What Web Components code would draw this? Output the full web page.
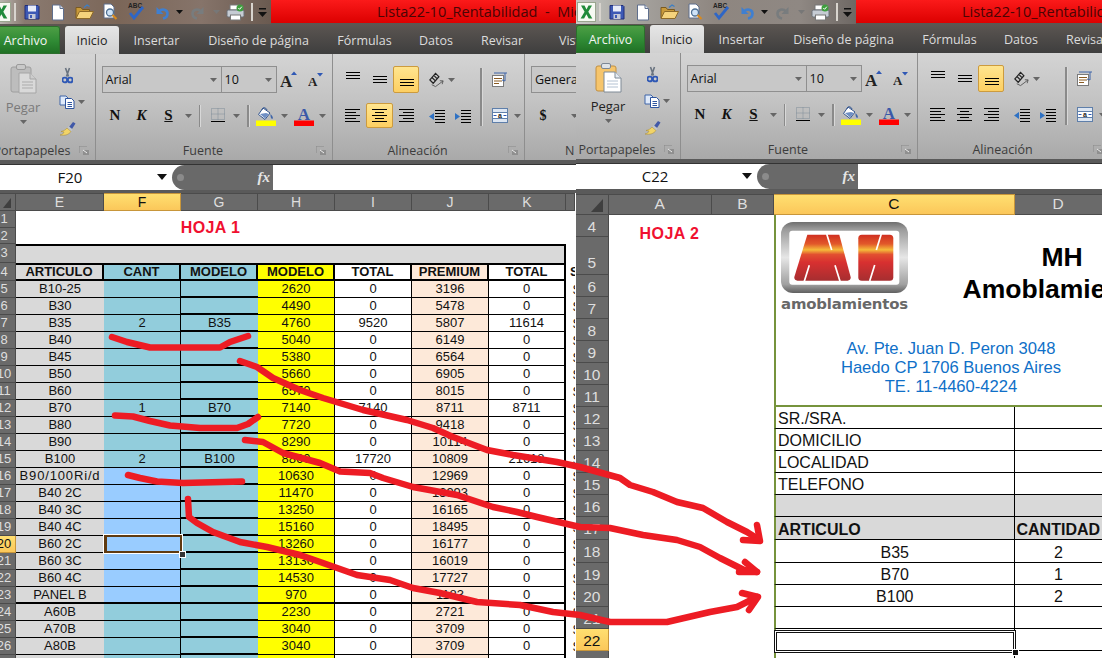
<!DOCTYPE html>
<html lang="es">
<head>
<meta charset="utf-8">
<title>Lista22-10_Rentabilidad</title>
<style>
  html, body { margin: 0; padding: 0; background: #555; }
  body { width: 1102px; height: 658px; overflow: hidden; display: flex; position: relative; font-family: "Liberation Sans", Arial, sans-serif; }
</style>
</head>
<body>
<xl-window style="width:576px;--qat:linear-gradient(90deg,#c9cbc6 0,#8a7a70 12%,#7b6658 45%,#86746a 75%,#6a5a50 100%)" shift="9" cell="F20" tabs-h="30" disabled-paste center-on>
  <hoja-uno></hoja-uno>
</xl-window>
<xl-window style="width:526px;--qat:linear-gradient(90deg,#c9cbc6 0,#a8a6a2 18%,#8e8680 50%,#8f8883 80%,#6e6864 100%)" shift="0" cell="C22" tabs-h="29">
  <hoja-dos></hoja-dos>
</xl-window>
<ink-strokes></ink-strokes>

<script>
const svg = (w, h, body) => `<svg width="${w}" height="${h}" viewBox="0 0 ${w} ${h}" xmlns="http://www.w3.org/2000/svg">${body}</svg>`;
const arrow = (c = "#555") => svg(7, 4, `<path d="M0 0h7L3.5 4z" fill="${c}"/>`);

const qatIcons = {
  save: svg(16, 16, `<path d="M1 1.5h13l1 1V15H1z" fill="#3d59b5" stroke="#222f78"/><rect x="4" y="1.5" width="8" height="6" fill="#e8ecf8"/><rect x="4.5" y="10" width="7" height="5" fill="#c5c9d6"/><rect x="6" y="11" width="2" height="3" fill="#3d59b5"/>`),
  doc: svg(14, 17, `<path d="M1.5 1h7.5l3.5 3.5V16h-11z" fill="#fff" stroke="#5f6f8d"/><path d="M9 1v3.5h3.500" fill="#dfe4ee" stroke="#5f6f8d"/>`),
  open: svg(19, 16, `<path d="M1 14V3.500h5l1.500 2h7v2" fill="#c99a3a" stroke="#7a5a20"/><path d="M1 14.500l3.500-7h14l-3.500 7z" fill="#f5d37c" stroke="#8e6a28"/><path d="M9 3.500l3-2.500 2.500 1.500" fill="none" stroke="#3d7fc4" stroke-width="1.300"/>`),
  preview: svg(16, 18, `<path d="M2 1h7l3 3v11H2z" fill="#fff" stroke="#5f6f8d"/><circle cx="8" cy="9.500" r="3.500" fill="#cfe3f7" stroke="#4d6f94" stroke-width="1.300"/><path d="M10.500 12l4 4" stroke="#d88a1e" stroke-width="2.200"/>`),
  spell: svg(18, 18, `<text x="1" y="5" font-family="Liberation Sans" font-size="6.500" font-weight="700" fill="#222">ABC</text><path d="M3 10l4 5 9-11" fill="none" stroke="#2e66c6" stroke-width="2.800"/>`),
  undo: svg(15, 15, `<path d="M4 6.500c3-3.500 8.500-2 8.500 2 0 2.500-2 4.500-4.500 5" fill="none" stroke="#3f7fd0" stroke-width="2.600"/><path d="M1.500 2v7h7z" fill="#3f7fd0"/>`),
  redo: svg(15, 15, `<path d="M11 6.500c-3-3.500-8.500-2-8.500 2 0 2.500 2 4.500 4.500 5" fill="none" stroke="#787c7e" stroke-width="2.600"/><path d="M13.500 2v7h-7z" fill="#787c7e"/>`),
  print: svg(19, 17, `<rect x="4" y="1" width="10" height="5" fill="#fff" stroke="#777"/><rect x="1" y="6" width="17" height="7" rx="1.500" fill="#c6ccd4" stroke="#6b7078"/><rect x="4.500" y="11" width="10" height="5" fill="#fff" stroke="#777"/><circle cx="14" cy="4" r="3.500" fill="#3f9e3f"/><path d="M12.300 4l1.300 1.300 2.200-2.600" fill="none" stroke="#fff"/>`),
  custom: svg(9, 9, `<rect x="1" y="0" width="7" height="1.500" fill="#111"/><path d="M0 4h9L4.500 9z" fill="#111"/>`),
  excel: svg(19, 20, `<rect x=".5" y=".5" width="18" height="19" fill="#f6f9f2" stroke="#9aa58f"/><path d="M4 3.500h3.500l2 4 2-4H15l-3.700 6.300L15.300 16.500h-3.600l-2.300-4.300-2.300 4.300H3.600l4-6.700z" fill="#1f8a3a"/>`)
};

const lines = (w, h, ys, lens, x0) => svg(w, h, ys.map((y, i) => {
  const l = lens[i % lens.length];
  const x = x0 === "c" ? Math.round((w - l) / 2) : x0 === "r" ? w - l : 0;
  return `<rect x="${x}" y="${y}" width="${l}" height="1" fill="#000"/>`;
}).join(""));

const ribbonIcons = {
  paste: on => on
    ? svg(27, 30, `<rect x="1" y="3" width="20" height="25" rx="2" fill="#f6c56c" stroke="#c08f42"/><rect x="6.500" y="0.500" width="9" height="5" rx="1.500" fill="#dfe3e8" stroke="#7d8794"/><path d="M9 9h11l6 6v14H9z" fill="#fff" stroke="#7f8a96"/><path d="M20 9v6h6" fill="#e6ecf3" stroke="#7f8a96"/><path d="M12 18h11M12 21h11M12 24h11" stroke="#b4c2d2"/>`)
    : svg(27, 30, `<rect x="1" y="3" width="20" height="25" rx="2" fill="#bdbdbd" stroke="#9e9e9e"/><rect x="6.500" y="0.500" width="9" height="5" rx="1.500" fill="#c8c8c8" stroke="#9a9a9a"/><path d="M9 9h11l6 6v14H9z" fill="#d9d9d9" stroke="#a5a5a5"/><path d="M20 9v6h6" fill="#cdcdcd" stroke="#a5a5a5"/><path d="M12 18h11M12 21h11M12 24h11" stroke="#ababab"/>`),
  cut: svg(11, 17, `<path d="M3.500 1l3 8.500M7.500 1l-3 8.500" stroke="#6a7480" stroke-width="1.600"/><circle cx="2.800" cy="13" r="2.400" fill="none" stroke="#2f58b5" stroke-width="1.900"/><circle cx="8.200" cy="13" r="2.400" fill="none" stroke="#2f58b5" stroke-width="1.900"/>`),
  copy: svg(16, 14, `<path d="M1 1h6l2 2v7H1z" fill="#dfeafa" stroke="#3f65a8"/><path d="M6.500 3.500h6l2.500 2.500v7.500H6.500z" fill="#fff" stroke="#2f55a0"/><path d="M8.500 7.500h4.500M8.500 9.500h4.500M8.500 11.500h4.500" stroke="#2f55a0"/>`),
  brush: svg(17, 15, `<path d="M10 6l4-5 2.500 1.500L13 8z" fill="#4058a8"/><path d="M9.500 5l4 3.500-1.500 2-4-3z" fill="#bfc4cc"/><path d="M8 7l4 3.500c-2 3-6 4.500-11 3.500 2.500-.5 3.500-1.500 4-3-1-.3-2-.5-3-.5 2.500-.5 4.500-1.500 6-3.500z" fill="#f2d468" stroke="#a88a32" stroke-width=".500"/>`),
  launcher: svg(10, 9, `<path d="M0 0h8M0 0v7" stroke="#8a8a8a"/><rect x="4" y="4" width="6" height="5" fill="#8f8f8f"/><path d="M4 4l4 3" stroke="#eee"/>`),
  grow: svg(19, 17, `<text x="0" y="16" font-family="Liberation Serif" font-weight="700" font-size="17" fill="#222">A</text><path d="M11 4l3-3.500 3 3.500z" fill="#2f58b5"/>`),
  shrink: svg(16, 15, `<text x="0" y="14" font-family="Liberation Serif" font-weight="700" font-size="13" fill="#222">A</text><path d="M9 1h6l-3 3.500z" fill="#2f58b5"/>`),
  border: svg(14, 15, `<path d="M.5 .5h13v11h-13zM7 .5v11M.5 6h13" fill="none" stroke="#7f8c98" stroke-dasharray="1 1"/><rect y="13" width="14" height="1" fill="#000"/>`),
  fill: svg(20, 20, `<path d="M7 2l7 5-5 6.500-6.500-5z" fill="#fff" stroke="#33558f"/><path d="M4 8l6-1 3 1-4 4.500z" fill="#6f8fc4"/><path d="M6 4c0-3 4-3 5 0" fill="none" stroke="#33558f"/><path d="M14.500 8c2 2 3 3.500 2 5-1.300 0-2.200-2-2-5z" fill="#3f65a8"/><rect x="0" y="14.500" width="20" height="5.500" fill="#ffff00"/>`),
  color: svg(20, 20, `<text x="10" y="13.500" text-anchor="middle" font-family="Liberation Serif" font-weight="700" font-size="17" fill="#3a58a8">A</text><rect y="14.500" width="20" height="5.500" fill="#ff0000"/>`),
  orient: svg(18, 17, `<path d="M2 9l6-7 3.500 3.500-6 7zM4.200 6.400l3.600 3.600M6.200 4.200l3.600 3.600" fill="none" stroke="#222" stroke-width="1.300"/><path d="M4 14l4 2 8-6M16 10l-3.500-.2M16 10l-1 3.500" fill="none" stroke="#5a5a5a"/>`),
  wrap: svg(16, 15, `<rect x=".5" y="3.500" width="11" height="11" fill="#fff" stroke="#7a7a7a"/><path d="M2 6.500h8M2 9h8M2 11.500h5" stroke="#8a5a20"/><path d="M2 1h13M13 1v8l-3-1" fill="none" stroke="#3f65a8"/>`),
  indentL: svg(16, 14, `<path d="M6 1.500h10M6 4.500h10M6 7.500h10M6 10.500h10M6 13.500h10" stroke="#000"/><path d="M0 7.500l5-3.500v7z" fill="#2f72c4"/>`),
  indentR: svg(16, 14, `<path d="M6 1.500h10M6 4.500h10M6 7.500h10M6 10.500h10M6 13.500h10" stroke="#000"/><path d="M5 7.500L0 4v7z" fill="#2f72c4"/>`),
  merge: svg(16, 15, `<rect x=".5" y=".5" width="15" height="14" fill="#dde6f2" stroke="#5f7faa"/><rect x=".5" y="4.500" width="15" height="6" fill="#fff" stroke="#5f7faa"/><text x="8" y="10" text-anchor="middle" font-family="Liberation Sans" font-weight="700" font-size="7" fill="#222">a</text><path d="M1.500 7.500h3M11.500 7.500h3" stroke="#2f58b5"/>`)
};
const aTop = lines(15, 27, [6, 9, 12], [14], "c");
const aMid = lines(15, 27, [10, 13, 16], [14], "c");
const aBot = lines(15, 27, [13, 16, 19], [14], "c");
const rLeft = lines(15, 25, [6, 9, 12, 15, 18], [15, 11], 0);
const rCenter = lines(15, 25, [6, 9, 12, 15, 18], [15, 9], "c");
const rRight = lines(15, 25, [6, 9, 12, 15, 18], [15, 11], "r");

class XlTitlebar extends HTMLElement {
  constructor() {
    super();
    this.attachShadow({ mode: "open" });
    const cell = (w, html) => `<span class="q" style="width:${w}px">${html}</span>`;
    this.shadowRoot.innerHTML = /*html*/ `
      <style>
        :host { display: flex; height: 24px; width: 640px; background: #5c5652; }
        .qat { display: flex; width: 279.5px; height: 24px; align-items: center; flex: none; background: var(--qat); }
        .q { display: flex; justify-content: center; align-items: center; flex: none; height: 23px; }
        .sep { width: 1.5px; height: 18px; background: #d8d4ce; }
        .red { flex: 1; height: 23px; background: linear-gradient(#fb1a1a, #dc0000); padding-left: 106.5px;
          font: 14.5px/23px "Open Sans", sans-serif; color: #4a0505; white-space: pre; box-sizing: border-box; }
      </style>
      <div class="qat">
        ${cell(20, qatIcons.excel)}${cell(8, `<i class="sep"></i>`)}
        ${cell(26, qatIcons.save)}${cell(26, qatIcons.doc)}${cell(26, qatIcons.open)}${cell(26, qatIcons.preview)}${cell(26, qatIcons.spell)}
        ${cell(26, qatIcons.undo)}${cell(8, arrow("#111"))}${cell(28, qatIcons.redo)}${cell(10, arrow("#777"))}
        ${cell(28, qatIcons.print)}${cell(6, `<i class="sep"></i>`)}${cell(15, qatIcons.custom)}
      </div>
      <div class="red">Lista22-10_Rentabilidad  -  Microsoft Excel</div>`;
  }
}

class XlTabs extends HTMLElement {
  constructor() {
    super();
    this.attachShadow({ mode: "open" });
    const tabs = [["Insertar", 75], ["Diseño de página", 129], ["Fórmulas", 83], ["Datos", 60], ["Revisar", 72], ["Vista", 70]];
    this.shadowRoot.innerHTML = /*html*/ `
      <style>
        :host { display: flex; align-items: flex-end; width: 640px; background: linear-gradient(#5c5652, #3e3e3e);
          font: 12.5px "Open Sans", sans-serif; color: #dcdcdc; }
        span { display: flex; align-items: center; justify-content: center; height: 28px; flex: none; white-space: nowrap; }
        .file { width: 69px; color: #f4f4f4; border-radius: 3px 3px 0 0; margin-right: 5px;
          background: linear-gradient(#4fa046, #2f8a34 55%, #1f6f24); box-shadow: inset 0 0 0 1px #2c6e2c; }
        .home { width: 54px; color: #222; border-radius: 3px 3px 0 0; background: linear-gradient(#e6e6e6, #d0d0d0); }
      </style>
      <span class="file">Archivo</span><span class="home">Inicio</span>
      ${tabs.map(([t, w]) => `<span style="width:${w}px">${t}</span>`).join("")}`;
  }
}

class XlRibbon extends HTMLElement {
  constructor() {
    super();
    this.attachShadow({ mode: "open" });
  }

  connectedCallback() {
    const pasteOn = !this.hasAttribute("disabled-paste");
    const centerOn = this.hasAttribute("center-on");
    const t = (w, html = "", cls = "") => `<span class="t ${cls}" style="width:${w}px">${html}</span>`;
    const ar = (w, c) => t(w, arrow(c || "#666"));
    const sep = w => t(w, `<i class="vl"></i>`);
    const label = text => `<div class="lab"><span>${text}</span><em>${ribbonIcons.launcher}</em></div>`;
    this.shadowRoot.innerHTML = /*html*/ `
      <style>
        :host { display: flex; height: 106px; width: 640px; font: 12.5px "Open Sans", sans-serif; color: #333;
          background: linear-gradient(#d4d4d4, #c3c3c3 45%, #a9a9a9); }
        .g { display: flex; flex-direction: column; flex: none; height: 106px; box-sizing: border-box; border-right: 1.5px solid #8e8e8e; padding-top: 12px; position: relative; }
        .r { display: flex; flex: none; }
        .r1 { height: 27px; margin-bottom: 10px; }
        .r2 { height: 25px; }
        .t { display: flex; align-items: center; justify-content: center; flex: none; height: 100%; box-sizing: border-box; }
        .vl { display: block; width: 1.5px; height: 22px; background: #8a8a8a; box-shadow: 1px 0 #d8d8d8; }
        .on { background: linear-gradient(#ffe58f, #fdcf62); border: 1px solid #cc9b3e; border-radius: 2px; }
        .lab { position: absolute; left: 0; right: 0; bottom: 1px; height: 18px; display: flex; color: #3c3c3c; align-items: center; }
        .lab span { flex: 1; text-align: center; }
        .lab em { width: 22px; display: flex; justify-content: center; }
        .box { border: 1px solid #8f8f8f; display: flex; align-items: center; justify-content: space-between; padding: 0 4px 0 3px; box-sizing: border-box; height: 27px; font-size: 12.5px; color: #111; flex: none; background: #c8c8c8; }
        .b { font: 700 15px "Liberation Serif", serif; color: #111; }
        .cl { display: grid; grid-template-columns: 65px 1fr; height: 90px; margin-top: -5px; }
        .p { display: flex; flex-direction: column; align-items: center; padding-top: 3px; margin-left: -1px; }
        .p b { font-weight: 400; font-size: 13px; color: ${pasteOn ? "#222" : "#7a7a7a"}; margin: 4px 0 4px; height: 18px; }
        .m { display: flex; flex-direction: column; }
        .m span { display: flex; height: 27px; align-items: center; }
        .m u { display: flex; width: 22px; justify-content: center; text-decoration: none; }
        .stack { display: flex; }
        .c2 { display: flex; flex-direction: column; }
      </style>
      <section class="g" style="width:105px">
        <div class="cl">
          <div class="p">${ribbonIcons.paste(pasteOn)}<b>Pegar</b>${arrow("#666")}</div>
          <div class="m">
            <span><u style="margin-top:2px">${ribbonIcons.cut}</u></span>
            <span><u>${ribbonIcons.copy}</u>${arrow("#666")}</span>
            <span><u>${ribbonIcons.brush}</u></span>
          </div>
        </div>
        ${label("Portapapeles")}
      </section>
      <section class="g" style="width:237px;padding-left:5.5px">
        <div class="r r1">
          <span class="box" style="width:120px">Arial${arrow("#666")}</span>
          <span class="box" style="width:55px;border-left:0">10${arrow("#666")}</span>
          ${t(26, ribbonIcons.grow)}${t(26, ribbonIcons.shrink)}
        </div>
        <div class="r r2">
          ${t(27, `<span class="b">N</span>`)}${t(26, `<span class="b"><i>K</i></span>`)}${t(28, `<span class="b"><u>S</u></span>`)}${ar(11)}
          ${sep(12)}${t(24, ribbonIcons.border)}${ar(13)}${sep(11)}
          ${t(25, ribbonIcons.fill)}${ar(12)}${t(27, ribbonIcons.color)}${ar(10)}
        </div>
        ${label("Fuente")}
      </section>
      <section class="g" style="width:192px;padding-left:5px">
        <div class="stack">
          <div class="c2" style="width:137px">
            <div class="r r1">
              ${t(28, aTop)}${t(26, aMid)}${t(1)}${t(26, aBot, "on")}${t(9)}${t(17, ribbonIcons.orient)}${t(0)}${ar(12)}
            </div>
            <div class="r r2">
              ${t(28, rLeft)}${t(27, rCenter, centerOn ? "on" : "")}${t(27, rRight)}${t(4)}${t(25, ribbonIcons.indentL)}${t(1)}${t(25, ribbonIcons.indentR)}
            </div>
          </div>
          <i class="vl" style="height:58px;margin:2px 0 0 5px"></i>
          <div class="c2" style="margin-left:5px">
            <div class="r r1">${t(26, ribbonIcons.wrap)}</div>
            <div class="r r2">${t(26, ribbonIcons.merge)}${ar(9)}</div>
          </div>
        </div>
        ${label("Alineación")}
      </section>
      <section class="g" style="width:100px;padding-left:6px;border:0">
        <div class="r r1"><span class="box" style="width:120px">Genera</span></div>
        <div class="r r2">${t(24, `<span class="b" style="font-size:14px">$</span>`)}${t(14)}${ar(10)}</div>
        <div class="lab" style="justify-content:flex-start;padding-left:40px"><span style="flex:none">N</span></div>
      </section>`;
  }
}

class XlFormula extends HTMLElement {
  constructor() {
    super();
    this.attachShadow({ mode: "open" });
  }

  connectedCallback() {
    this.shadowRoot.innerHTML = /*html*/ `
      <style>
        :host { display: flex; height: 25px; width: 640px; margin-top: 3.5px; background: #fff; border-top: 1px solid #333; box-sizing: content-box; }
        .name { width: 181px; display: flex; align-items: center; flex: none; background: #fff; font: 15px "Open Sans", sans-serif; color: #111; }
        .name span { width: 158px; text-align: center; }
        .pill { width: 101px; flex: none; background: #696969; border-radius: 13px 0 0 13px; display: flex; align-items: center; justify-content: space-between; padding: 0 3px 0 5px; box-sizing: border-box; }
        .dot { width: 7px; height: 7px; border-radius: 50%; background: #8b8b8b; }
        .fx { font: italic 700 15px "Liberation Serif", serif; color: #e5e5e5; }
        .name svg { margin-left: 8px; }
      </style>
      <div class="name"><span>${this.getAttribute("cell")}</span>${svg(10, 6, `<path d="M0 0h10L5 6z" fill="#111"/>`)}</div>
      <div class="pill"><i class="dot"></i><span class="fx">fx</span></div>`;
  }
}

class XlWindow extends HTMLElement {
  constructor() {
    super();
    this.attachShadow({ mode: "open" });
  }

  connectedCallback() {
    const shift = this.getAttribute("shift") || 0;
    const tabsH = this.getAttribute("tabs-h");
    const pass = ["disabled-paste", "center-on"].filter(a => this.hasAttribute(a)).join(" ");
    this.shadowRoot.innerHTML = /*html*/ `
      <style>
        :host { display: flex; flex-direction: column; flex: none; height: 658px; overflow: hidden; background: #5a5a5a; }
        .chrome { margin-left: -${shift}px; flex: none; }
        xl-tabs { height: ${tabsH}px; }
        .gap { height: ${tabsH == 30 ? 3 : 5}px; flex: none; }
      </style>
      <div class="chrome">
        <xl-titlebar></xl-titlebar>
        <xl-tabs></xl-tabs>
        <xl-ribbon ${pass}></xl-ribbon>
        <xl-formula cell="${this.getAttribute("cell")}"></xl-formula>
      </div>
      <div class="gap"></div>
      <slot></slot>`;
  }
}

const sheetBase = `
  :host { display: block; font: 13px "Liberation Sans", Arial, sans-serif; color: #111; background: #fff; }
  .grid { display: grid; overflow: hidden; }
  .grid > div { box-sizing: border-box; display: flex; align-items: center; justify-content: center; overflow: hidden; white-space: nowrap; min-width: 0; }
  .ch { background: #6a6a6a; color: #dedede; border-right: 1px solid #4b4b4b; border-top: 1px solid #4b4b4b; border-bottom: 1px solid #4b4b4b; }
  .rh { background: #6a6a6a; color: #dedede; border-bottom: 1px solid #4b4b4b; border-right: 1px solid #4b4b4b; }
  .sel { background: linear-gradient(#ffdf70, #fbc75a); color: #111; border-color: #c8963a !important; }
`;

class HojaUno extends HTMLElement {
  constructor() {
    super();
    this.attachShadow({ mode: "open" });
    const data = [
      ["B10-25", "", "", 2620, 0, 3196, 0], ["B30", "", "", 4490, 0, 5478, 0], ["B35", 2, "B35", 4760, 9520, 5807, 11614],
      ["B40", "", "", 5040, 0, 6149, 0], ["B45", "", "", 5380, 0, 6564, 0], ["B50", "", "", 5660, 0, 6905, 0],
      ["B60", "", "", 6570, 0, 8015, 0], ["B70", 1, "B70", 7140, 7140, 8711, 8711], ["B80", "", "", 7720, 0, 9418, 0],
      ["B90", "", "", 8290, 0, 10114, 0], ["B100", 2, "B100", 8860, 17720, 10809, 21618], ["B90/100Ri/d", "", "", 10630, 0, 12969, 0],
      ["B40 2C", "", "", 11470, 0, 13993, 0], ["B40 3C", "", "", 13250, 0, 16165, 0], ["B40 4C", "", "", 15160, 0, 18495, 0],
      ["B60 2C", "", "", 13260, 0, 16177, 0], ["B60 3C", "", "", 13130, 0, 16019, 0], ["B60 4C", "", "", 14530, 0, 17727, 0],
      ["PANEL B", "", "", 970, 0, 1183, 0], ["A60B", "", "", 2230, 0, 2721, 0], ["A70B", "", "", 3040, 0, 3709, 0],
      ["A80B", "", "", 3040, 0, 3709, 0], ["", "", "", "", "", "", ""]
    ];
    const letters = ["E", "F", "G", "H", "I", "J", "K", ""];
    const rowNo = n => `<div class="rh"><span class="n">${n}</span></div>`;
    let html = `<div class="ch corner">${svg(8, 10, `<path d="M8 0v10H0z" fill="#3f3f3f"/>`)}</div>`;
    html += letters.map(l => `<div class="ch ${l === "F" ? "sel" : ""}">${l}</div>`).join("");
    html += rowNo(1) + `<div class="title" style="grid-column:2/7;grid-row:2/4">HOJA 1</div><div style="grid-column:7/10;grid-row:2/4"></div>`;
    html += rowNo(2);
    html += rowNo(3) + `<div class="band" style="grid-column:2/9"></div><div></div>`;
    html += rowNo(4);
    const heads = [["ARTICULO", "e"], ["CANT", "bl"], ["MODELO", "bl"], ["MODELO", "y"], ["TOTAL", "w"], ["PREMIUM", "p"], ["TOTAL", "w k"]];
    html += heads.map(([t, c]) => `<div class="hd ${c}">${t}</div>`).join("") + `<div class="l h"><b>S</b></div>`;
    data.forEach((r, i) => {
      const n = i + 5;
      const rowCls = n === 23 ? " end" : "";
      const fBlue = n >= 16 && n <= 23 ? "f2" : "bl";
      const wide = r[0] === "B90/100Ri/d" ? ` style="letter-spacing:.85px"` : "";
      html += `<div class="rh ${n === 20 ? "sel" : ""}"><span class="n">${n}</span></div>`;
      html += `<div class="c e${rowCls}"><span${wide}>${r[0]}</span></div>`;
      html += `<div class="c ${fBlue} f${rowCls}">${r[1]}</div>`;
      html += `<div class="c bl g${rowCls}">${r[2]}</div>`;
      html += `<div class="c y v${rowCls}">${r[3]}</div>`;
      html += `<div class="c w v${rowCls}">${r[4]}</div>`;
      html += `<div class="c p v${rowCls}">${r[5]}</div>`;
      html += `<div class="c w k${rowCls}">${r[6]}</div>`;
      html += `<div class="l"><span>${r[0] ? "$" : ""}</span></div>`;
    });
    this.shadowRoot.innerHTML = /*html*/ `
      <style>
        ${sheetBase}
        .grid { position: relative; grid-template-columns: 16px 88px 77px 77px 77px 77px 77px 77px 9px;
          grid-template-rows: 18px 17px 16px 19px 18px repeat(23, 17px); }
        .ch { font-size: 14px; }
        .corner { justify-content: flex-end !important; padding-right: 4px; align-items: flex-end !important; padding-bottom: 2px; }
        .rh { justify-content: flex-start !important; font-size: 13px; }
        .n { display: block; width: 24px; margin-left: -8px; flex: none; text-align: center; }
        .title { color: #f01030; font-weight: 700; font-size: 16px; letter-spacing: .4px; padding: 2px 7px 0 0; background: #fff; }
        .band { background: #d9d9d9; border-top: 2px solid #000; border-right: 2px solid #000; }
        .hd { font-weight: 700; font-size: 13px; color: #111; border-top: 2px solid #000; border-bottom: 2px solid #000; border-right: 2px solid #000; }
        .hd.e { background: #d9d9d9; border-right: 2px solid #000; }
        .c { border-bottom: 1px solid #000; }
        .e { background: #d9d9d9; }
        .bl { background: #92cddc; }
        .f2 { background: #99ccff; }
        .y { background: #ffff00; }
        .w { background: #fff; }
        .p { background: #fde9d9; }
        .f { border-right: 1px solid #000; }
        .g { border-bottom: 2px solid #000; }
        .v { border-right: 1px solid #000; }
        .k { border-right: 2px solid #000; }
        .end { border-bottom: 2px solid #000; }
        .l { justify-content: flex-start !important; padding-left: 7px; color: #111; background: #fff; overflow: hidden; }
        .l.h { padding-left: 4px; }
        .active { position: absolute; left: 104px; top: 342.5px; width: 78px; height: 18px; box-sizing: border-box;
          border: 2px solid #5f3a10; border-left-width: 3px; outline: 1px solid #fff; }
        .handle { position: absolute; left: 179px; top: 358px; width: 5px; height: 5px; background: #333; border: 1px solid #fff; }
      </style>
      <div class="grid">${html}<i class="active"></i><i class="handle"></i></div>`;
  }
}

class MhLogo extends HTMLElement {
  constructor() {
    super();
    this.attachShadow({ mode: "open" });
    this.shadowRoot.innerHTML = /*html*/ `
      <style>
        :host { display: flex; flex-direction: column; width: 127px; }
        span { font: 700 14.9px/14px "DejaVu Sans", sans-serif; color: #686868; text-align: center; margin-top: 4px; letter-spacing: -.18px; white-space: nowrap; }
        svg { display: block; }
      </style>
      <svg width="127" height="71" viewBox="0 0 127 71" xmlns="http://www.w3.org/2000/svg">
        <defs>
          <linearGradient id="chrome" x1="0" y1="0" x2="0" y2="1">
            <stop offset="0" stop-color="#6e6e6e"/><stop offset=".1" stop-color="#9a9a9a"/><stop offset=".5" stop-color="#e6e6e6"/>
            <stop offset=".88" stop-color="#a0a0a0"/><stop offset="1" stop-color="#606060"/>
          </linearGradient>
          <linearGradient id="mh" x1="0" y1="0" x2="0" y2="1">
            <stop offset="0" stop-color="#cf2e20"/><stop offset=".2" stop-color="#e2582a"/><stop offset=".33" stop-color="#f5bb3a"/>
            <stop offset=".43" stop-color="#e25030"/><stop offset=".6" stop-color="#d83030"/><stop offset="1" stop-color="#a62e30"/>
          </linearGradient>
        </defs>
        <rect width="127" height="71" rx="12" fill="url(#chrome)"/>
        <rect x="8.300" y="8.700" width="110" height="54" rx="3" fill="#fff"/>
        <path d="M26.300 12.700h32l11.300 42c.5 2.200-.8 4-3 4H16.400c-2.200 0-3.500-1.800-3-4z" fill="url(#mh)"/>
        <rect x="77.300" y="12.700" width="35" height="46" rx="3.500" fill="url(#mh)"/>
        <path d="M45.700 12l5 16M28.300 43.300l-5 16M54 43.300l5 16M100.300 12l-5 16M93.700 43l-5 16" stroke="#fff" stroke-width="1.700" fill="none"/>
      </svg>
      <span>amoblamientos</span>`;
  }
}

class HojaDos extends HTMLElement {
  constructor() {
    super();
    this.attachShadow({ mode: "open" });
    let html = `<div class="ch corner">${svg(12, 13, `<path d="M12 0v13H0z" fill="#3f3f3f"/>`)}</div>`;
    html += `<div class="ch">A</div><div class="ch">B</div><div class="ch sel">C</div><div class="ch">D</div>`;
    for (let n = 4; n <= 23; n++) html += `<div class="rh ${n === 22 ? "sel" : ""} ${n === 5 ? "low" : ""}" style="grid-row:${n - 2};grid-column:1">${n}</div>`;
    html += `<div class="hoja" style="grid-column:2/4;grid-row:2/24"><span>HOJA 2</span></div>`;
    html += `
      <div class="head" style="grid-column:4/6;grid-row:2/10">
        <mh-logo></mh-logo>
        <div class="brand">MH<br>Amoblamientos</div>
        <div class="addr"><span>Av. Pte. Juan D. Peron 3048<br>Haedo CP 1706 Buenos Aires<br>TE. 11-4460-4224</span></div>
      </div>`;
    const rows = [
      ["SR./SRA.", "", "tx"], ["DOMICILIO", "", "tx"], ["LOCALIDAD", "", "tx"], ["TELEFONO", "", "tx"], ["", "", "gr"],
      ["ARTICULO", "CANTIDAD", "gr tx b"], ["B35", "2", "ct"], ["B70", "1", "ct"], ["B100", "2", "ct"], ["", "", "ct"], ["", "", "ct"], ["", "", "ct"]
    ];
    rows.forEach(([a, b, cls], i) => {
      html += `<div class="c cc ${cls}" style="grid-column:4;grid-row:${i + 10}">${a}</div>`;
      html += `<div class="c cd ${cls}" style="grid-column:5;grid-row:${i + 10}">${b}</div>`;
    });
    this.shadowRoot.innerHTML = /*html*/ `
      <style>
        ${sheetBase}
        :host { font-size: 16px; }
        .grid { position: relative; grid-template-columns: 32.500px 103.500px 62px 240.500px 88px;
          grid-template-rows: 21.500px 22px 38px repeat(6, 22px) repeat(4, 22px) 22px 23px 23px repeat(4, 22px) 22px 8px; }
        .ch { font-size: 15.5px; }
        .corner { justify-content: flex-end !important; align-items: flex-end !important; padding: 0 5px 2px 0; }
        .rh { font-size: 15.5px; padding-top: 2px; }
        .low { align-items: flex-end !important; padding: 0 0 2px; }
        .hoja { align-items: flex-start !important; justify-content: flex-start !important; padding: 11px 0 0 31px; background: #fff; }
        .hoja span { color: #f01030; font-weight: 700; font-size: 16px; letter-spacing: .45px; line-height: 15px; }
        .head { display: block !important; background: #fff; border-left: 2px solid #76933c; border-bottom: 2px solid #76933c; overflow: hidden; }
        mh-logo { margin: 7px 0 0 5px; }
        .brand { position: absolute; left: 331px; top: 47px; width: 310px; text-align: center; font: 700 26.500px/32px "Liberation Sans", Arial, sans-serif; color: #000; }
        .addr { position: absolute; left: 175px; top: 145px; width: 400px; white-space: nowrap; font-size: 16.600px; line-height: 19px; color: #0f70c8; display: flex; justify-content: center; text-align: center; }
        .c { border-bottom: 1px solid #000; padding-top: 3px; }
        .cc { border-left: 2px solid #76933c; border-right: 1px solid #000; }
        .tx { justify-content: flex-start !important; padding-left: 2px; }
        .gr { background: #d9d9d9; }
        .b { font-weight: 700; }
        .active { position: absolute; left: 198px; top: 436px; width: 242px; height: 23px; box-sizing: border-box; border: 1px solid #111; box-shadow: inset 0 0 0 1px #fff, inset 0 0 0 2px #111; }
        .handle { position: absolute; left: 436px; top: 455px; width: 5px; height: 5px; background: #111; border: 1px solid #fff; }
      </style>
      <div class="grid">${html}<i class="active"></i><i class="handle"></i></div>`;
  }
}

class InkStrokes extends HTMLElement {
  constructor() {
    super();
    this.attachShadow({ mode: "open" });
    const strokes = [
      "M112 337L127 342 150 347.500 180 347.500 220 347.500 230 342 248 336",
      "M240 361L257 367 273 378 300 390 323 398 363 410 407 420 433 428 453 437 487 450 513 455 557 462 580 467 620 478 630 485 653 492 677 502 703 508 727 522 747 532 758 539",
      "M757 525L760 541 743 540",
      "M115 415.500L133 416.500 150 421 170 425.500 200 428 237 428 248 424 258 417",
      "M245 440L263 442 283 453 320 463 340 471.500 370 473 383 478 413 487 457 495 493 507 517 512 537 517 580 527 610 528 643 535 677 540 700 547 720 558 744 570 757 572",
      "M745 562L757 572 739 572",
      "M128 475L140 478 157 481.500 183 483 242 481.500",
      "M188 499L189 517 197 523 213 532 240 542 267 547 300 555 323 563 357 575 390 580 413 588 440 593 477 602 520 605 553 612 580 615 610 622 667 622 710 612 737 607 757 597",
      "M742 593L758 597 749 610"
    ];
    this.shadowRoot.innerHTML = /*html*/ `
      <style>
        :host { position: absolute; left: 0; top: 0; width: 1102px; height: 658px; pointer-events: none; }
        svg { display: block; }
      </style>
      <svg width="1102" height="658" viewBox="0 0 1102 658" xmlns="http://www.w3.org/2000/svg">
        ${strokes.map(d => `<path d="${d}" fill="none" stroke="#ed1c24" stroke-width="6.500" stroke-linecap="round" stroke-linejoin="round"/>`).join("")}
      </svg>`;
  }
}

customElements.define("xl-titlebar", XlTitlebar);
customElements.define("xl-tabs", XlTabs);
customElements.define("xl-ribbon", XlRibbon);
customElements.define("xl-formula", XlFormula);
customElements.define("xl-window", XlWindow);
customElements.define("mh-logo", MhLogo);
customElements.define("hoja-uno", HojaUno);
customElements.define("hoja-dos", HojaDos);
customElements.define("ink-strokes", InkStrokes);
</script>
</body>
</html>
